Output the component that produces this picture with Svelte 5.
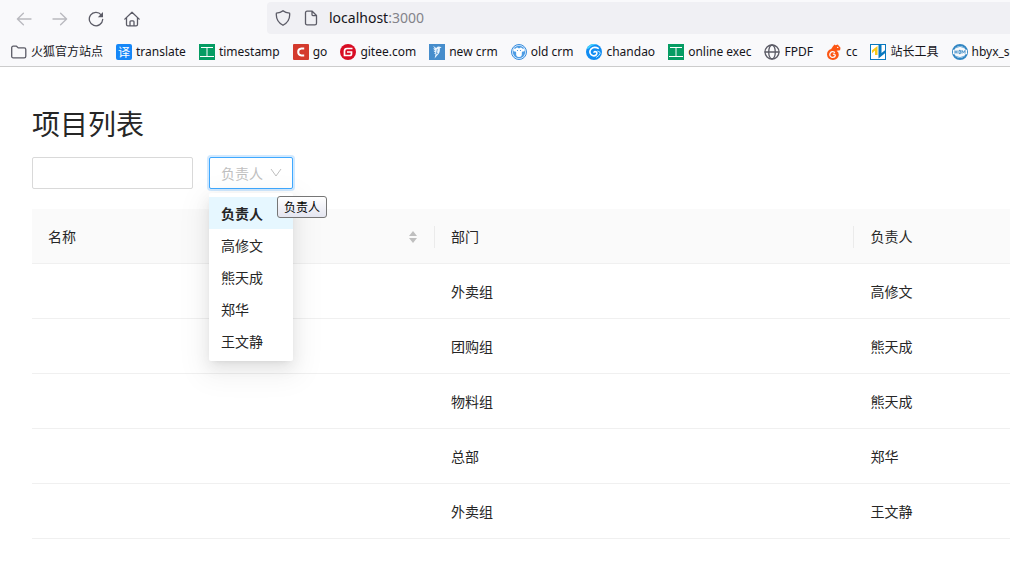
<script>
	const bookmarks = [
		{ icon: 'folder', name: '火狐官方站点' },
		{ icon: 'translate', name: 'translate' },
		{ icon: 'tool', name: 'timestamp' },
		{ icon: 'go', name: 'go' },
		{ icon: 'gitee', name: 'gitee.com' },
		{ icon: 'bird', name: 'new crm' },
		{ icon: 'monkey', name: 'old crm' },
		{ icon: 'chandao', name: 'chandao' },
		{ icon: 'tool', name: 'online exec' },
		{ icon: 'globe', name: 'FPDF' },
		{ icon: 'cc', name: 'cc' },
		{ icon: 'chinaz', name: '站长工具' },
		{ icon: 'hbyx', name: 'hbyx_se' }
	];

	const users = ['负责人', '高修文', '熊天成', '郑华', '王文静'];

	const projects = [
		{ id: 1, name: '', organization: '外卖组', person: '高修文' },
		{ id: 2, name: '', organization: '团购组', person: '熊天成' },
		{ id: 3, name: '', organization: '物料组', person: '熊天成' },
		{ id: 4, name: '', organization: '总部', person: '郑华' },
		{ id: 5, name: '', organization: '外卖组', person: '王文静' }
	];

	let keyword = $state('');
	let person = $state('负责人');
</script>

{#snippet icon(kind)}
	<svg class="icon" viewBox="0 0 16 16" aria-hidden="true">
		{#if kind === 'folder'}
			<path class="line" d="M.7 12.2V3.8Q.7 2.2 2.3 2.2h3.2l1.7 1.7h6q1.6 0 1.6 1.6v6.7q0 1.6-1.6 1.6H2.3Q.7 13.8.7 12.2Z" />
		{:else if kind === 'translate'}
			<rect width="16" height="16" rx="2" fill="#1687f8" />
			<text x="8" y="12.5" font-size="12" text-anchor="middle" fill="#fff">译</text>
		{:else if kind === 'tool'}
			<rect width="16" height="16" fill="#059c63" />
			<path d="M2 3.5h12M8 3.5v9M1 12.5h14" fill="none" stroke="#fff" />
		{:else if kind === 'go'}
			<rect width="16" height="16" rx="1" fill="#d43a2d" />
			<path d="M11.2 4.6H8.4Q5.2 4.9 5.2 8t3.2 3.4h2.8" fill="none" stroke="#fff" stroke-width="2" />
		{:else if kind === 'gitee'}
			<circle cx="8" cy="8" r="8" fill="#d80d24" />
			<path d="M12.5 4.5H7.1Q4.5 4.5 4.5 7.1v4.4h5.2q1.8 0 1.8-1.8V8H7" fill="none" stroke="#fff" stroke-width="1.7" />
		{:else if kind === 'bird'}
			<rect width="16" height="16" fill="#468dcc" />
			<path d="M4 1.8 7.2 4q1.6-2 3.8-1.2l1.6.7-1.8.8q.5 4.2-2 6.4L5.6 14.4l1-4.2L4.8 9h1.8L4.4 6.8h2L4 4.4h1.8Z" fill="#eaf5ff" />
			<path d="m8.4 5-1.2 5 1.8-1" fill="none" stroke="#468dcc" stroke-width=".7" />
		{:else if kind === 'monkey'}
			<circle cx="8" cy="8" r="7.5" fill="#dceeff" stroke="#398ddd" />
			<circle cx="8" cy="8" r="6.2" fill="#4d9ce4" />
			<circle cx="3.7" cy="6" r="1.5" fill="#fff" />
			<circle cx="12.3" cy="6" r="1.5" fill="#fff" />
			<path d="M4.2 6q0-2.4 2.3-2.4L8 4.4l1.5-.8q2.3 0 2.3 2.4 0 1.5-1 2.5.6 4.5-2.8 4.5T5.2 8.5q-1-1-1-2.5Z" fill="#fff" />
			<circle cx="6.5" cy="6.5" r=".6" fill="#398ddd" />
			<circle cx="9.5" cy="6.5" r=".6" fill="#398ddd" />
		{:else if kind === 'chandao'}
			<circle cx="8" cy="8" r="8" fill="#118cf2" />
			<path d="M.7 5Q3.3-1.3 10.5.4 5.8 1 4.3 3 3 5.2.7 5Z" fill="#45d3ff" />
			<path d="M12.8 4.6Q8 2 5 5.1q-2.3 3 .1 5.6 2.7 2.4 5.1.2 1.5-2-.3-3.1-1.9-.6-2 1" fill="none" stroke="#fff" stroke-width="1.6" />
			<path d="M11.3 7q3.4.4 2.8 2.5t-4 4" fill="none" stroke="#bfeaff" />
		{:else if kind === 'globe'}
			<circle class="line" cx="8" cy="8" r="7" />
			<ellipse class="line" cx="8" cy="8" rx="3.3" ry="7" />
			<path class="line" d="M1 8h14" />
		{:else if kind === 'cc'}
			<path d="M7 2.2 8.5.6l1.2.7 2-.7 2.8 3.2-.4 2.4-3.5.6q2.4 1.3 2.2 4.2Q12.1 15.7 7 16 1.4 15.7 1 10.5 1 6 5.2 5Z" fill="#fc5614" />
			<path d="M9 8.6Q5.8 6.5 4.1 9.3q-1.1 3 1.8 4 3.1.4 3.4-1.9-.5-1.8-2.4-1" fill="none" stroke="#f9f9fb" stroke-width="1.3" />
			<circle cx="11.7" cy="3.4" r=".7" fill="#fff" />
		{:else if kind === 'chinaz'}
			<rect x=".5" y=".5" width="15" height="15" fill="#fff" stroke="#0878bf" />
			<path d="M2 6.3 7.5 2v9H5V6.5L2 9.2Z" fill="#f8c91c" />
			<path d="M8.5 1v13.5L15 9.3V6.3L11.5 9V1Z" fill="#0878bf" />
		{:else}
			<circle cx="8" cy="8" r="7" fill="#f9f9fb" stroke="#3286c3" stroke-width="2" />
			<path d="M3.5 3.9q4.5-3 9 0M3.5 12.1q4.5 3 9 0" fill="none" stroke="#70afdb" />
			<path d="M1 5.8h14v4.4H1Z" fill="#f9f9fb" />
			<path d="M3 6.4v3.2M3 8h2M5 6.4v3.2M7 6.4v3.2h1.4q.8-.8 0-1.6.6-1 0-1.6H7M10 9.6V6.4L11.5 8.5 13 6.4v3.2" fill="none" stroke="#3286c3" stroke-width=".9" />
		{/if}
	</svg>
{/snippet}

<header class="browser">
	<div class="toolbar">
		<nav class="navigation" aria-label="Navigation">
			<button aria-label="Back" disabled>
				<svg class="icon" viewBox="0 0 16 16"><path class="line" d="M15 8H1.4m6-5.8L1.4 8l6 5.8" /></svg>
			</button>
			<button aria-label="Forward" disabled>
				<svg class="icon" viewBox="0 0 16 16"><path class="line" d="M1 8h13.6m-6-5.8 6 5.8-6 5.8" /></svg>
			</button>
			<button aria-label="Reload">
				<svg class="icon" viewBox="0 0 16 16">
					<path class="line" d="M13.2 3.8A6.7 6.7 0 1 0 14.7 8.5" />
					<path d="M15 1v5.2H9.8Z" fill="#5b5b66" />
				</svg>
			</button>
			<button aria-label="Home">
				<svg class="icon" viewBox="0 0 16 16">
					<path class="line" d="M.8 8.1 8 1.2l7.2 6.9M2.5 6.8v6.7q0 1.4 1.4 1.4h8.2q1.4 0 1.4-1.4V6.8M6 14.8v-4q0-1 1-1h2q1 0 1 1v4" />
				</svg>
			</button>
		</nav>
		<div class="address">
			<svg class="icon" viewBox="0 0 16 16" aria-hidden="true">
				<path class="line" d="M8 .8q2.4 2.3 6.6 2.3.9 8.2-6.6 12.2Q.5 11.3 1.4 3.1 5.6 3.1 8 .8Z" />
			</svg>
			<svg class="icon" viewBox="0 0 16 16" aria-hidden="true">
				<path class="line" d="M2.5 13.2V2.8q0-1.6 1.6-1.6h5.1l4.3 4.3v7.7q0 1.6-1.6 1.6H4.1q-1.6 0-1.6-1.6ZM9 1.2v3.2q0 1.3 1.3 1.3h3.2" />
			</svg>
			<span class="url">localhost<span class="port">:3000</span></span>
		</div>
	</div>
	<nav class="bookmarks" aria-label="Bookmarks">
		{#each bookmarks as bookmark}
			<a href="#/">{@render icon(bookmark.icon)}{bookmark.name}</a>
		{/each}
	</nav>
</header>

<main>
	<h1>项目列表</h1>

	<form>
		<input type="text" aria-label="项目名" bind:value={keyword} />
		<div class="picker">
			<select aria-label="负责人" bind:value={person}>
				{#each users as user}
					<option value={user}>{user}</option>
				{/each}
			</select>
			<svg class="arrow" viewBox="0 0 12 12" aria-hidden="true"><path d="m1 2 5 7 5-7" /></svg>
			<ul class="dropdown">
				{#each users as user}
					<li>
						<button type="button" class:selected={user === person} onclick={() => (person = user)}>
							{user}
						</button>
					</li>
				{/each}
			</ul>
			<span class="tooltip" role="tooltip">负责人</span>
		</div>
	</form>

	<table>
		<thead>
			<tr>
				<th class="name">
					<div class="sorter">
						名称
						<svg viewBox="0 0 8 12" aria-hidden="true"><path d="M4 0 8 5H0ZM0 7h8l-4 5Z" /></svg>
					</div>
				</th>
				<th class="organization"><div>部门</div></th>
				<th>负责人</th>
			</tr>
		</thead>
		<tbody>
			{#each projects as project (project.id)}
				<tr>
					<td>{project.name}</td>
					<td>{project.organization}</td>
					<td>{project.person}</td>
				</tr>
			{/each}
		</tbody>
	</table>
</main>

<style>
	:global(body) {
		background: #fff;
		color: #262626;
		font-family: 'Noto Sans', 'Noto Sans CJK SC', sans-serif;
		font-size: 14px;
		line-height: 22px;
		overflow-x: hidden;
	}

	* {
		box-sizing: border-box;
	}

	button,
	input,
	select {
		font: inherit;
	}

	.icon {
		display: block;
		flex: none;
		width: 16px;
		height: 16px;
	}

	.line {
		fill: none;
		stroke: #5b5b66;
		stroke-width: 1.3;
		stroke-linecap: round;
		stroke-linejoin: round;
	}

	.browser {
		overflow: hidden;
		background: #f9f9fb;
		border-bottom: 1px solid #ccc;
	}

	.toolbar {
		display: flex;
		align-items: flex-start;
		height: 38px;
		padding-top: 2px;
	}

	.navigation {
		display: flex;
		flex: none;
		gap: 20px;
		width: 267px;
		padding: 9px 16px;
	}

	.navigation button {
		padding: 0;
		border: none;
		background: none;
	}

	.navigation button:disabled {
		opacity: 0.4;
	}

	.address {
		display: flex;
		flex: 1;
		align-items: center;
		gap: 12px;
		height: 32px;
		padding-left: 8px;
		border-radius: 4px 0 0 4px;
		background: #f0f0f4;
	}

	.url {
		margin-left: -2px;
		color: #15141a;
	}

	.port {
		color: #84838a;
	}

	.bookmarks {
		display: flex;
		gap: 13px;
		height: 28px;
		padding-left: 11px;
	}

	.bookmarks a {
		display: flex;
		flex: none;
		align-items: center;
		gap: 4px;
		color: #15141a;
		font-size: 12px;
		text-decoration: none;
		white-space: nowrap;
	}

	main {
		padding: 32px 0 32px 32px;
	}

	h1 {
		margin: 0 0 8px;
		font-size: 28px;
		font-weight: 400;
		line-height: 50px;
	}

	form {
		display: flex;
		gap: 16px;
		margin-bottom: 20px;
	}

	input {
		width: 161px;
		height: 32px;
		padding: 4px 11px;
		border: 1px solid #d9d9d9;
		border-radius: 2px;
	}

	.picker {
		position: relative;
		width: 84px;
	}

	select {
		display: block;
		appearance: none;
		width: 100%;
		height: 32px;
		padding: 1px 11px 0;
		border: 1px solid #40a9ff;
		border-radius: 2px;
		outline: none;
		background: #fff;
		box-shadow: 0 0 0 2px rgba(24, 144, 255, 0.2);
		color: #bfbfbf;
	}

	option {
		color: #262626;
	}

	.arrow {
		position: absolute;
		top: 10px;
		right: 11px;
		width: 12px;
		height: 12px;
		fill: none;
		stroke: #bfbfbf;
		pointer-events: none;
	}

	.dropdown {
		position: absolute;
		z-index: 1;
		top: 36px;
		left: 0;
		width: 100%;
		margin: 0;
		padding: 4px 0;
		border-radius: 2px;
		background: #fff;
		box-shadow:
			0 3px 6px -4px rgba(0, 0, 0, 0.12),
			0 6px 16px 0 rgba(0, 0, 0, 0.08),
			0 9px 28px 8px rgba(0, 0, 0, 0.05);
		list-style: none;
	}

	.dropdown button {
		display: block;
		width: 100%;
		padding: 6px 12px 4px;
		border: none;
		background: none;
		color: #262626;
		text-align: left;
	}

	.dropdown .selected {
		background: #e6f7ff;
		font-weight: 600;
	}

	.tooltip {
		position: absolute;
		z-index: 2;
		top: 39px;
		left: 68px;
		padding: 1px 6px 0;
		border: 1px solid #767676;
		border-radius: 3px;
		background: linear-gradient(#fff, #e4e5f0);
		color: #000;
		font-size: 12px;
		line-height: 19px;
		white-space: nowrap;
	}

	table {
		width: 100%;
		border-collapse: separate;
		border-spacing: 0;
		table-layout: fixed;
	}

	th,
	td {
		height: 55px;
		padding: 17px 16px 15px;
		border-bottom: 1px solid #f0f0f0;
		font-weight: 400;
		text-align: left;
	}

	th {
		background: #fafafa;
	}

	.name {
		width: 41.2%;
	}

	.organization {
		width: 42.9%;
	}

	.name,
	.organization {
		padding-right: 0;
	}

	.name div,
	.organization div {
		border-right: 1px solid #ebebeb;
	}

	.sorter {
		display: flex;
		align-items: center;
		justify-content: space-between;
		padding-right: 17px;
	}

	.sorter svg {
		width: 8px;
		height: 12px;
		fill: #bfbfbf;
	}
</style>
